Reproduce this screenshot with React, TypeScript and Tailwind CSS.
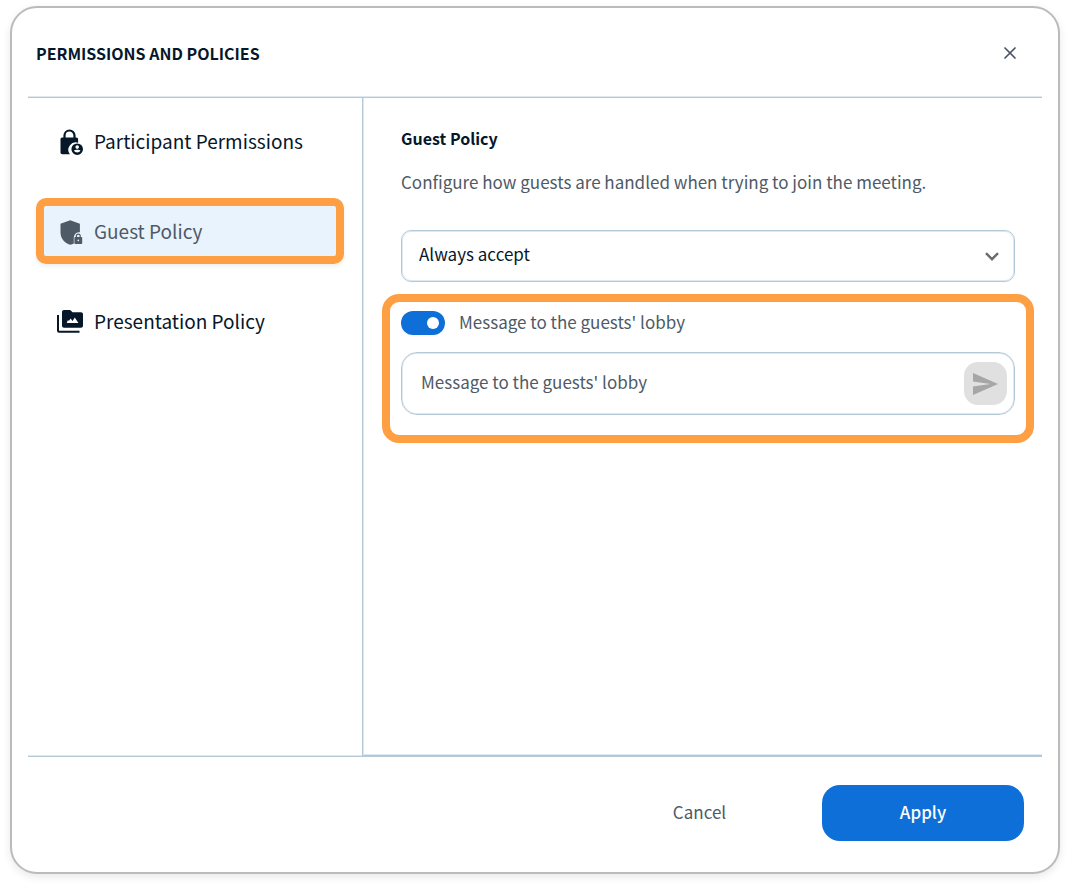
import { useState } from "react";

function LockPersonIcon() {
  return (
    <svg viewBox="-3 -2 28 28" className="size-7" fill="currentColor" aria-hidden="true">
      <path d="M5.500 10V6.500a5 5 0 0 1 10 0V10" fill="none" stroke="currentColor" strokeWidth="2.200" />
      <path d="M3.200 8.600h14.200c1 0 1.700.8 1.700 1.700v3.500a7.400 7.400 0 0 0-8.200 11.500H3.200c-.9 0-1.700-.8-1.700-1.700V10.300c0-.9.8-1.700 1.700-1.700z" />
      <path
        fillRule="evenodd"
        d="M18.200 14.400a5.800 5.800 0 1 1 0 11.600 5.800 5.800 0 0 1 0-11.600zm0 1.900a1.800 1.800 0 1 0 0 3.600 1.800 1.800 0 0 0 0-3.600zm-3.300 5.500a4 4 0 0 0 6.600 0c-.6-.7-1.900-1-3.300-1s-2.700.3-3.300 1z"
      />
    </svg>
  );
}

function ShieldLockIcon() {
  return (
    <svg viewBox="-3 -2 28 28" className="size-7" fill="currentColor" aria-hidden="true">
      <path d="M11.200 1.200l9.700 3.600v8.400a5.400 5.400 0 0 0-6.100 5.200v6.100c-1.100.5-2.400.9-3.600 1.200-5.600-1.400-9.700-6.600-9.700-12.300V4.800z" />
      <path
        fillRule="evenodd"
        d="M16.800 18v-1a2.500 2.500 0 0 1 5 0v1h.4c.6 0 1 .4 1 1v4.900c0 .6-.4 1-1 1h-5.800c-.6 0-1-.4-1-1V19c0-.6.4-1 1-1zm1.200 0h2.600v-1a1.300 1.300 0 0 0-2.600 0zm1.300 2.600a.8.8 0 1 0 0 1.600.8.8 0 0 0 0-1.600z"
      />
    </svg>
  );
}

function MediaFolderIcon() {
  return (
    <svg viewBox="-1 -2 28 28" className="size-7" fill="currentColor" aria-hidden="true">
      <path d="M1 6v15.800c0 .6.400 1 1 1h20.500" fill="none" stroke="currentColor" strokeWidth="2" />
      <path
        fillRule="evenodd"
        d="M7 1h5.700c.5 0 .8.200 1.100.500l1.700 1.700H24c1.100 0 2 .9 2 2v11.600c0 1.100-.9 2-2 2H7c-1.100 0-2-.9-2-2V3c0-1.100.9-2 2-2zm2.700 12.900h11.700l-3.600-5.300-2.300 3.400-1.900-2.600-1.700 2.500-.9-.9z"
      />
    </svg>
  );
}

const tabs = [
  { label: "Participant Permissions", Icon: LockPersonIcon },
  { label: "Guest Policy", Icon: ShieldLockIcon },
  { label: "Presentation Policy", Icon: MediaFolderIcon },
];

export default function App() {
  const [active, setActive] = useState("Guest Policy");
  const [lobby, setLobby] = useState(true);

  return (
    <div className="flex min-h-screen flex-col bg-white px-[10px] pt-[6px] pb-[14px] font-['Noto_Sans_CJK_SC',sans-serif] text-[17px] leading-6 text-[#4e5a66]">
      <section
        aria-labelledby="title"
        className="flex grow flex-col rounded-[27px] border-2 border-[#bbbbbb] bg-white px-4 shadow-[0_3px_8px_rgba(0,0,0,0.09)]"
      >
        <header className="flex h-[90px] items-center justify-between border-b border-[#b4c9d8] pr-4 pl-2 shadow-[inset_0_-1px_0_#dfe8f0]">
          <h1 id="title" className="text-base font-bold text-[#06172a]">
            PERMISSIONS AND POLICIES
          </h1>
          <button type="button" aria-label="Close" className="flex size-8 items-center justify-center">
            <svg viewBox="0 0 12 12" className="size-3" fill="none" stroke="#4a5466" strokeWidth="1.700" strokeLinecap="round" aria-hidden="true">
              <path d="M1 1l10 10M11 1L1 11" />
            </svg>
          </button>
        </header>

        <div className="flex grow">
          <nav className="flex w-[334px] shrink-0 flex-col gap-6 border-b border-[#b4c9d8] pt-2.5 pr-[18px] pl-2 shadow-[inset_0_-1px_0_#dfe8f0]">
            {tabs.map(({ label, Icon }) => (
              <button
                key={label}
                type="button"
                onClick={() => setActive(label)}
                className={
                  active === label
                    ? "flex h-[66px] items-center gap-2.5 rounded-[10px] border-8 border-[#ff9f43] bg-[#e8f3fd] px-3 text-[19px] text-[#4e5a66] shadow-[0_3px_4px_rgba(0,0,0,0.06)]"
                    : "flex h-[66px] items-center gap-2.5 border-8 border-transparent px-3 text-[19px] text-[#06172a]"
                }
              >
                <Icon />
                {label}
              </button>
            ))}
          </nav>

          <main className="grow border-b-2 border-l border-[#b4c9d8] px-2 pt-7 pl-[19px] shadow-[inset_1px_-1px_0_#dfe8f0]">
            <div className="px-[19px]">
              <h2 className="text-base leading-6 font-bold text-[#06172a]">Guest Policy</h2>
              <p className="mt-5">Configure how guests are handled when trying to join the meeting.</p>
              <div className="relative mt-9">
                <select
                  aria-label="Guest policy"
                  className="h-[52px] w-full appearance-none rounded-[10px] border border-[#b4c9d8] bg-white px-[17px] pb-1 text-[#06172a] shadow-[inset_0_0_0_1px_#dfe8f0]"
                >
                  <option>Always accept</option>
                  <option>Always deny</option>
                  <option>Ask moderator</option>
                </select>
                <svg viewBox="0 0 14 9" className="pointer-events-none absolute top-[22px] right-4 h-[9px] w-[14px]" fill="none" stroke="#6b6b6b" strokeWidth="2.400" aria-hidden="true">
                  <path d="M1 1.200l6 6 6-6" />
                </svg>
              </div>
            </div>

            <div className="mt-3 rounded-[17px] border-8 border-[#ff9f43] px-[11px] pt-2 pb-5">
              <label className="flex items-center gap-3.5">
                <input
                  type="checkbox"
                  role="switch"
                  checked={lobby}
                  onChange={() => setLobby(!lobby)}
                  className="flex h-6 w-11 appearance-none items-center rounded-full bg-[#8a97a5] px-1.5 before:size-3 before:rounded-full before:bg-white checked:justify-end checked:bg-[#0f6fd8]"
                />
                <span className="pb-0.5">Message to the guests' lobby</span>
              </label>
              <div className="mt-4 flex h-[63px] items-center rounded-2xl border border-[#b4c9d8] pr-[7px] pl-[19px] shadow-[inset_0_0_0_1px_#dfe8f0]">
                <input
                  type="text"
                  aria-label="Message to the guests' lobby"
                  placeholder="Message to the guests' lobby"
                  className="min-w-0 grow bg-transparent pb-1 outline-none placeholder:text-[#4e5a66]"
                />
                <button type="button" aria-label="Send" className="flex size-[43px] items-center justify-center rounded-[14px] bg-[#e0e0e0]">
                  <svg viewBox="0 0 25 22" className="h-[22px] w-[25px]" fill="#a6a6a6" aria-hidden="true">
                    <path d="M0 0l25 11L0 22v-8.500L17.500 11 0 8.500z" />
                  </svg>
                </button>
              </div>
            </div>
          </main>
        </div>

        <footer className="flex h-[115px] items-center justify-end gap-6 pr-[18px] pb-[3px]">
          <button type="button" className="h-14 w-[197px] pb-0.5">
            Cancel
          </button>
          <button type="button" className="h-14 w-[202px] rounded-[18px] bg-[#0f6fd8] pb-0.5 font-medium text-white">
            Apply
          </button>
        </footer>
      </section>
    </div>
  );
}
